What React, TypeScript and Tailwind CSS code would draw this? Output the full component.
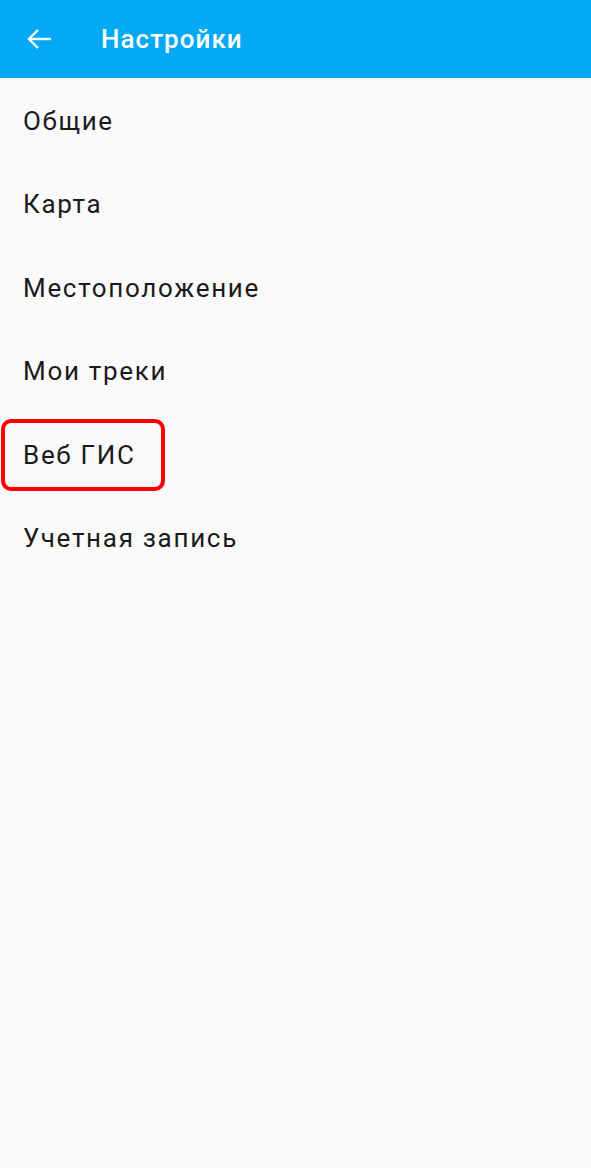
const items = ["Общие", "Карта", "Местоположение", "Мои треки", "Веб ГИС", "Учетная запись"];

export default function App() {
  return (
    <div className="min-h-[1168px] w-full bg-[#fafafa] font-['Roboto',sans-serif]">
      <div className="flex h-[78px] items-center bg-[#03a9f4] text-white">
        <div className="flex w-[101px] pl-[27px]">
          <svg width="24" height="22" viewBox="0 0 24 22" fill="none" stroke="currentColor" strokeWidth="2.4" strokeLinecap="square">
            <path d="M23 11H3" />
            <path d="M11 2L2 11l9 9" strokeLinecap="butt" strokeLinejoin="miter" />
          </svg>
        </div>
        <h1 className="text-[26px] font-medium tracking-[0.04em]">Настройки</h1>
      </div>
      <div className="flex flex-col">
        {items.map((name) => (
          <div key={name} className="relative flex h-[83.5px] items-center px-[23px] pt-[3px]">
            <span className="text-[26px] tracking-[0.065em] text-[#1a1a1a]">{name}</span>
            {name === "Веб ГИС" && (
              <div className="absolute left-[1px] top-[7px] h-[72px] w-[164px] rounded-[10px] border-4 border-[#ff0000]" />
            )}
          </div>
        ))}
      </div>
    </div>
  );
}
